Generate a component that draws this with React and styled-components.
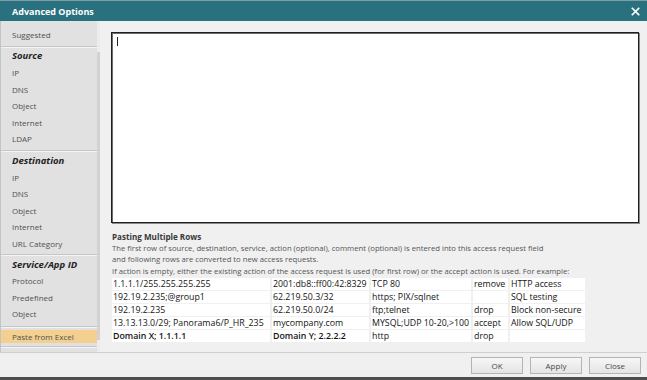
import React from "react";
import styled, { createGlobalStyle } from "styled-components";

const GlobalStyle = createGlobalStyle`
  html, body { margin: 0; padding: 0; background: #ffffff; }
  body { font-family: "Open Sans", "Noto Sans", sans-serif; }
  * { box-sizing: border-box; }
`;

const Window = styled.div`
  width: 647px;
  height: 380px;
  display: flex;
  flex-direction: column;
  background: #f0f0f0;
  border-bottom: 3px solid #4e4e4e;
  overflow: hidden;
`;

const TitleBar = styled.div`
  height: 21px;
  flex: none;
  display: flex;
  align-items: center;
  justify-content: space-between;
  padding: 0 7px 0 12px;
  background: #2a7180;
  border-top: 1px solid #7f9ea6;
`;

const Title = styled.div`
  color: #ffffff;
  font-weight: 700;
  font-size: 9px;
`;

const CloseIcon = styled.svg`
  width: 9px;
  height: 9px;
  display: block;
`;

const Body = styled.div`
  flex: 1;
  display: flex;
  min-height: 0;
`;

const Sidebar = styled.div`
  width: 100px;
  flex: none;
  display: flex;
  background: #ececec;
  border-left: 1px solid #c4c4c4;
`;

const SideList = styled.div`
  width: 96px;
  flex: none;
  background: #e1e1e1;
  padding-top: 5px;
  height: 332px;
  display: flex;
  flex-direction: column;
`;

const ScrollTrack = styled.div`
  flex: 1;
  display: flex;
  flex-direction: column;
  padding-top: 31px;
  padding-bottom: 12px;
`;

const ScrollThumb = styled.div`
  flex: 1;
  background: #d2d2d2;
`;

const Group = styled.div`
  display: flex;
  flex-direction: column;
  padding-bottom: ${(p) => p.$pb || 0}px;
`;

const Item = styled.div`
  height: ${(p) => (p.$h ? p.$h : 16.6)}px;
  display: flex;
  align-items: center;
  padding-left: 11px;
  font-size: 8px;
  color: #505050;
  background: ${(p) => (p.$active ? "#f3d08f" : "transparent")};
`;

const Heading = styled(Item)`
  font-size: 9.5px;
  font-weight: 700;
  font-style: italic;
  color: #1e1e1e;
`;

const Separator = styled.div`
  height: 2px;
  margin: ${(p) => p.$m || "3px 0 0"};
  border-top: 1px solid #c6c6c6;
  border-bottom: 1px solid #f4f4f4;
`;

const Content = styled.div`
  flex: 1;
  display: flex;
  flex-direction: column;
  align-items: flex-start;
  padding: 11px 8px 0 11px;
  background: #f0f0f0;
`;

const TextArea = styled.div`
  align-self: stretch;
  height: 191px;
  flex: none;
  background: #ffffff;
  border: 1px solid #1f1f1f;
  box-shadow: inset 1px 1px 0 #6c6c6c, 1px 1px 0 #8a8a8a;
  padding: 4px 0 0 5px;
`;

const Caret = styled.div`
  width: 1px;
  height: 9px;
  background: #222;
`;

const HelpTitle = styled.div`
  margin-top: 8px;
  padding-left: 1px;
  font-size: 8.1px;
  line-height: 11.5px;
  font-weight: 700;
  color: #3a3a3a;
`;

const HelpText = styled.div`
  padding-left: 1px;
  font-size: 7.7px;
  line-height: 11.5px;
  color: #555555;
  white-space: nowrap;
`;

const Table = styled.table`
  border-collapse: separate;
  border-spacing: 2px 1.75px;
  table-layout: fixed;
  margin: -0.5px 0 0 -1px;
  font-size: 8.8px;
  color: #141414;
`;

const Cell = styled.td`
  background: #ffffff;
  height: 12px;
  padding: 0 0 0 1px;
  font-weight: ${(p) => (p.$bold ? 600 : 400)};
  white-space: nowrap;
  overflow: hidden;
  line-height: 12px;
`;

const Footer = styled.div`
  height: 25px;
  flex: none;
  display: flex;
  align-items: center;
  justify-content: flex-end;
  gap: 7px;
  padding: 0 6px 0 0;
  border-top: 1px solid #cfcfcf;
  background: #f0f0f0;
`;

const Button = styled.button`
  width: ${(p) => p.$w || 50}px;
  height: 17px;
  padding: 0;
  border: 1px solid #b4b4b4;
  background: linear-gradient(#f7f7f7, #e4e4e4);
  color: #4a4a4a;
  font-family: inherit;
  font-size: 8px;
`;

const Col = styled.col`
  width: ${(p) => p.$w}px;
`;

const cols = [158, 97, 100, 35, 75];
const rows = [
  ["1.1.1.1/255.255.255.255", "2001:db8::ff00:42:8329", "TCP 80", "remove", "HTTP access"],
  ["192.19.2.235;@group1", "62.219.50.3/32", "https; PIX/sqlnet", "", "SQL testing"],
  ["192.19.2.235", "62.219.50.0/24", "ftp;telnet", "drop", "Block non-secure"],
  ["13.13.13.0/29; Panorama6/P_HR_235", "mycompany.com", "MYSQL;UDP 10-20,>100", "accept", "Allow SQL/UDP"],
  ["Domain X; 1.1.1.1", "Domain Y; 2.2.2.2", "http", "drop", ""],
];

export default function App() {
  return (
    <>
      <GlobalStyle />
      <Window>
        <TitleBar>
          <Title>Advanced Options</Title>
          <CloseIcon viewBox="0 0 10 10">
            <path d="M1.5 1.5 L8.5 8.5 M8.5 1.5 L1.5 8.5" stroke="#fff" strokeWidth="1.8" strokeLinecap="square" />
          </CloseIcon>
        </TitleBar>
        <Body>
          <Sidebar>
            <SideList>
              <Item>Suggested</Item>
              <Separator />
              <Group $pb={3}>
                <Heading>Source</Heading>
                <Item>IP</Item>
                <Item>DNS</Item>
                <Item>Object</Item>
                <Item>Internet</Item>
                <Item>LDAP</Item>
              </Group>
              <Separator $m="0" />
              <Group $pb={2}>
                <Heading>Destination</Heading>
                <Item>IP</Item>
                <Item>DNS</Item>
                <Item>Object</Item>
                <Item>Internet</Item>
                <Item>URL Category</Item>
              </Group>
              <Separator $m="0" />
              <Group $pb={4}>
                <Heading>Service/App ID</Heading>
                <Item>Protocol</Item>
                <Item>Predefined</Item>
                <Item>Object</Item>
              </Group>
              <Separator $m="0 0 2px" />
              <Item $active $h={13}>Paste from Excel</Item>
              <Separator $m="3px 0 0" />
            </SideList>
            <ScrollTrack>
              <ScrollThumb />
            </ScrollTrack>
          </Sidebar>
          <Content>
            <TextArea>
              <Caret />
            </TextArea>
            <HelpTitle>Pasting Multiple Rows</HelpTitle>
            <HelpText>
              The first row of source, destination, service, action (optional), comment (optional) is entered into this access request field
            </HelpText>
            <HelpText>and following rows are converted to new access requests.</HelpText>
            <HelpText>
              If action is empty, either the existing action of the access request is used (for first row) or the accept action is used. For example:
            </HelpText>
            <Table>
              <colgroup>
                {cols.map((w, i) => (
                  <Col key={i} $w={w} />
                ))}
              </colgroup>
              <tbody>
                {rows.map((r, i) => (
                  <tr key={i}>
                    {r.map((c, j) => (
                      <Cell key={j} $bold={i === 4 && j < 2}>
                        {c}
                      </Cell>
                    ))}
                  </tr>
                ))}
              </tbody>
            </Table>
          </Content>
        </Body>
        <Footer>
          <Button $w={52}>OK</Button>
          <Button $w={52}>Apply</Button>
          <Button $w={52}>Close</Button>
        </Footer>
      </Window>
    </>
  );
}
